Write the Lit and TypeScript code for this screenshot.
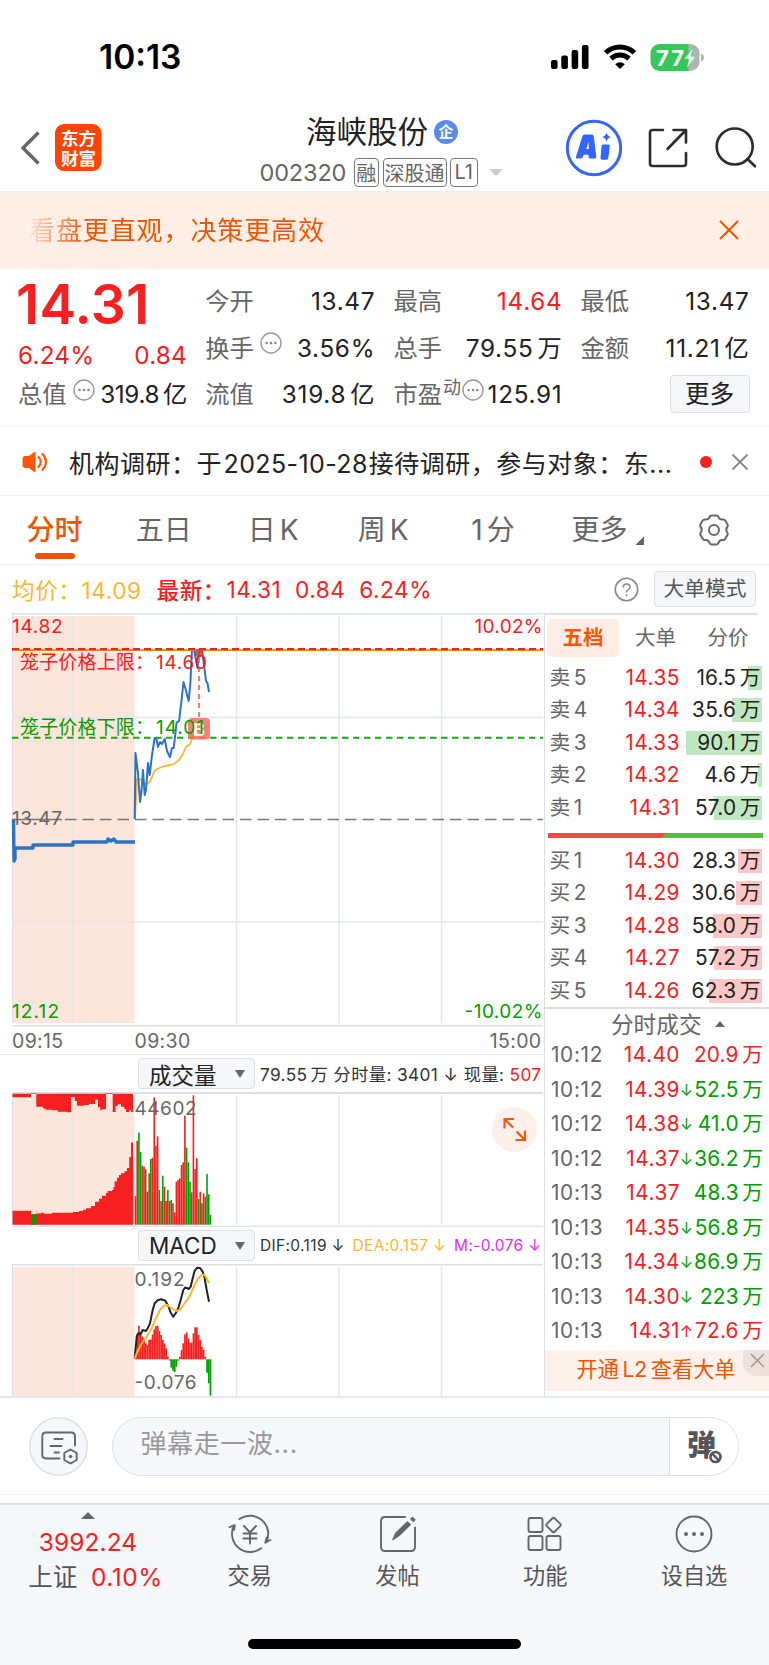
import { LitElement, html, svg, css } from "lit";
import { customElement } from "lit/decorators.js";

const CJK = /([\u4e00-\u9fff]+)/;

/** Puts a small gap between figures and the Chinese unit that follows them. */
const withUnit = (value: string) => {
  const m = value.match(/^([\d.]+)([\u4e00-\u9fff]+)$/);
  return m ? html`${m[1]}<span class="unit">${m[2]}</span>` : value;
};

const spaced = (label: string) =>
  label.split(CJK).filter(Boolean).map((p, i) => (i ? html`<span class="unit">${p}</span>` : p));

const points = (raw: string, s = 1, dy = 0) =>
  raw.trim().split(/\s+/).map((p) => {
    const [x, y] = p.split(",").map(Number);
    return `${(x / s).toFixed(1)},${(y / s + dy).toFixed(1)}`;
  }).join(" ");

const UP = "#f5201f";
const DOWN = "#009f00";

const PRICE = `134.7,819 135.5,753 138,773 140,802 141.5,791 143,770 144.7,795 146,790 148,763 149.7,775 152,755
 154.7,738 156.5,739 158,747 160,742 162,744 164.7,739 167,751 170,757 172,748 173.7,748 175,737 176.5,723 179,721
 181,705 183.5,682 185,687 188.7,701 190.3,684 192,650 194,649 196,660 197.5,668 199,652 202,649 204,665 206,681 207.5,683 209,692`;
const AVERAGE = `135,819 137,779 140,779 143,783 146,784 150,782 154,772 157,769 163,766.5 170,765 174,764 179,760 183,754
 186,747 190,744 193,736 198,730 203,728 209,726`;
const AUCTION = `13.5,820 14,861 15,859 15,848 33,848 33,845 73,845 73,842 107,842 108,839 111,841 114,839 116,842 135,842`;

const VOLUME = `588r 423r 398g 456g 497r 500r 508g 575r 520r 477g 473r 292r 437r 409r 570g 603r 527g 560r 603r 570g 603r 600g
 610r 637r 545r 540r 535r 495r 487r 347r 443g 487g 545g 577r 286r 507r 475r 597g 575r 610g 580r 590r 522g 583g 645g`;
const HISTOGRAM = `1055 1003 977 1005 1010 1015 1030 1035 1020 1018 1003 988 978 978 993 1005 1020 1030 1045 1070 1082 1103
 1112 1116 1100 1082 1070 1050 1030 1003 997 1015 1028 1028 1000 982 982 1005 1020 1040 1050 1070 1118 1150 1187`;
const DIF = `404,1075 410,1010 415,1000 422,1002 428,990 438,993 443,985 450,970 458,930 464,910 474,900 484,898 496,902
 505,918 512,938 520,950 528,938 535,925 542,900 550,870 556,862 566,867 572,860 578,835 584,812 592,803 600,804 608,815
 614,835 620,870 627,905`;
const DEA = `404,1075 412,1055 425,1030 440,1010 455,985 465,960 480,930 492,917 502,915 515,925 528,933 540,930 552,912
 565,895 575,875 585,852 595,835 605,825 613,824 620,835 628,850`;

/** Upper edge steps of the call auction: [x, y] pairs, the value holds until the next x. */
const UNMATCHED: [number, number][] = [[12.5, 1097.3], [31, 1093], [36.3, 1106.7], [43, 1108.5], [45.5, 1109.7], [52, 1110.3],
  [58, 1111.7], [67, 1112.3], [71, 1097], [74.7, 1101], [77, 1105.7], [84, 1105], [89, 1104], [95, 1099.7], [98, 1107.3],
  [100.3, 1110.3], [102, 1109.3], [106, 1093], [112.7, 1112], [115.5, 1106], [117.7, 1104.3], [121, 1106.7], [124.3, 1109],
  [126, 1112], [129.5, 1110], [131, 1112]];
const MATCHED: [number, number][] = [[12.5, 1210.8], [36.3, 1213.5], [41, 1212.7], [44, 1213.7], [52, 1212.8], [65, 1212.8],
  [73, 1212], [79, 1211], [83, 1209.7], [86, 1208.3], [91, 1206], [95, 1201.7], [99, 1198.7], [102, 1195.7], [106, 1193],
  [107.5, 1191], [112, 1190], [113.5, 1187.3], [114.6, 1181.5], [117, 1177.7], [119, 1175], [121, 1173.3], [124.5, 1171.3],
  [127, 1168], [129.3, 1157], [131, 1142.5]];

/** Draws [x, y] steps as a filled shape that stands on (or hangs from) the base line. */
const area = (steps: [number, number][], base: number) => {
  let d = `M${steps[0][0]} ${base}`;
  for (const [x, y] of steps) d += `H${x}V${y}`;
  return d + `H133V${base}Z`;
};

const dots = () => html`<svg class="dots" viewBox="0 0 22 22"><circle cx="11" cy="11" r="10" fill="none" stroke="#999" stroke-width="1.4"/>
  <g fill="#888"><circle cx="6.6" cy="11" r="1.3"/><circle cx="11" cy="11" r="1.3"/><circle cx="15.4" cy="11" r="1.3"/></g></svg>`;

@customElement("stock-header")
class StockHeader extends LitElement {
  static styles = css`
    :host { display: block; }
    .status { height: 114px; display: flex; align-items: center; padding: 0 65px 0 99px; box-sizing: border-box; justify-content: space-between; }
    .time { font-size: 33.500px; font-weight: 600; letter-spacing: 0; line-height: 40px; color: #000; }
    .status svg { display: block; width: 154px; height: 30px; }
    .pct { font: 700 22px Inter, sans-serif; }
    .bar { height: 77px; display: flex; border-bottom: 2px solid #eee; }
    .left { width: 240px; display: block; height: 77px; }
    .middle { width: 285px; }
    .right { width: 244px; height: 77px; display: block; }
    .name { display: flex; align-items: center; padding-left: 66px; height: 36px; font-size: 30.500px; color: #222; gap: 6px; line-height: 36px; }
    .badge { width: 24px; height: 24px; border-radius: 50%; background: #5a8be9; color: #fff; font-size: 15px; line-height: 24px; text-align: center; font-weight: 700; }
    .code { display: flex; align-items: center; height: 30px; margin-top: 7px; padding-left: 19.500px; color: #666; font-size: 23.500px; }
    .num { width: 94px; letter-spacing: -0.150px; }
    .tag { border: 1.500px solid #777; border-radius: 4px; height: 29px; font-size: 20px; box-sizing: border-box; margin-right: 3.500px; display: flex; align-items: center; justify-content: center; }
    .t1 { width: 25.500px; } .t3 { width: 64px; } .t2 { width: 27.500px; }
    .tri { width: 0; border: 7px solid transparent; border-top-color: #ccc; border-bottom: 0; margin-left: 8px; }
    .logo { font: 700 17.500px "Noto Sans CJK SC", sans-serif; }
  `;
  render() {
    return html`
      <div class="status">
        <span class="time">10:13</span>
        <svg viewBox="0 0 154 30">
          <g><rect x="1" y="18" width="6.6" height="9" rx="2"/><rect x="11.3" y="13.6" width="6.6" height="13.4" rx="2"/><rect x="21.6" y="8" width="6.6" height="19" rx="2"/><rect x="31.9" y="3" width="6.6" height="24" rx="2"/></g>
          <g fill="none" stroke="#000" stroke-width="5"><path d="M55.5 10.8a21 21 0 0 1 29 0"/><path d="M61 16.6a13 13 0 0 1 18 0"/></g>
          <path d="M70 27l-4.8-4.8a7 7 0 0 1 9.6 0z"/>
          <path d="M109.500 2H139v27h-29.500a9 9 0 0 1-9-9v-9a9 9 0 0 1 9-9z" fill="#34c759"/>
          <path d="M138.500 2h2a9 9 0 0 1 9 9v9a9 9 0 0 1-9 9h-2z" fill="#b3b3b3"/>
          <path d="M151 11.500q3 1 3 4t-3 4z" fill="#b3b3b3"/>
          <text class="pct" x="106" y="23.500" fill="#fff" textLength="28">77</text>
          <path d="M143.500 5.500l-9.500 11.500h5l-2.400 9.500 9.400-12.200h-5z" fill="#fff" stroke="#34c759" stroke-width=".6"/>
        </svg>
      </div>
      <div class="bar">
        <svg class="left" viewBox="0 114 240 77">
          <path d="M38.500 132.500L23 148l15.500 15.500" fill="none" stroke="#666" stroke-width="3.4"/>
          <rect x="55" y="124" width="46.500" height="47" rx="9" fill="#ff4400"/>
          <g class="logo" fill="#fff"><text x="61" y="145" textLength="35">东方</text><text x="61" y="164.800" textLength="35">财富</text></g>
        </svg>
        <div class="middle">
          <div class="name">海峡股份<span class="badge">企</span></div>
          <div class="code"><span class="num">002320</span>
            <span class="tag t1">融</span><span class="tag t3">深股通</span><span class="tag t2">L1</span>
            <i class="tri"></i></div>
        </div>
        <svg class="right" viewBox="525 114 244 77">
          <circle cx="594" cy="148" r="26.700" fill="none" stroke="#3565ff" stroke-width="3"/>
          <g fill="#3565ff"><path fill-rule="evenodd" d="M584.900 134.500h6.700q1.800 0 2.100 1.800l2.600 20.200q.2 2-1.700 2h-4.300q-1.600 0-1.800-1.600l-.3-2.200h-4.500l-1 2.600q-.5 1.200-1.900 1.200h-3.500q-2 0-1.300-1.900l6.500-20.500q.5-1.600 1.900-1.600zM588.500 142l-2.200 7h2.700z"/>
          <path d="M602.800 144.500h5.500q1.700 0 1.500 1.500l-1.500 11.900q-.3 1.900-2.200 1.900h-4q-1.800 0-1.600-1.800l1-11.700q.2-1.800 1.300-1.800z"/>
          <path d="M606.500 132.500q.9 3.700 4.400 4.600-3.500.9-4.400 4.600-.9-3.700-4.400-4.600 3.500-.9 4.400-4.600z"/></g>
          <g fill="none" stroke="#2c2c2c" stroke-width="2.600" stroke-linecap="round" stroke-linejoin="round">
            <path d="M663 130h-10.500q-2.500 0-2.500 2.500v31q0 2.500 2.500 2.500h31q2.500 0 2.500-2.500v-10.500M673.500 130H686v12.500M685.500 130.500L667.500 149"/>
            <circle cx="734.700" cy="146.500" r="18"/><path d="M747.500 159l7.500 7.300"/></g>
        </svg>
      </div>`;
  }
}

@customElement("quote-summary")
class QuoteSummary extends LitElement {
  static styles = css`
    :host { display: block; }
    .promo { height: 76px; background: #feeee6; display: flex; align-items: center; justify-content: space-between; padding: 0 29px 1px 29px; box-sizing: border-box; color: #ee5500; }
    .slogan { font-size: 26px; letter-spacing: .9px; line-height: 40px; background: linear-gradient(90deg, #ee550010, #ee5500 56px); -webkit-background-clip: text; color: transparent; }
    .promo svg { width: 22px; height: 22px; margin-top: -1px; }
    .grid { display: grid; grid-template-columns: 169px 170px 169px 169px; column-gap: 18.200px; padding: 9px 0 0 18px; height: 158px; box-sizing: border-box; font-size: 24.300px; color: #222; border-bottom: 1.500px solid #f0f1f3; }
    .cell { height: 46.500px; display: flex; align-items: center; justify-content: space-between; line-height: 30px; }
    .cell.first { height: 28px; }
    .cell.first .val { letter-spacing: -.4px; }
    .price { font-size: 55px; font-weight: 600; color: #f5201f; line-height: 53px; height: 51px; letter-spacing: .2px; margin-left: -2px; }
    .chg { height: 51px; display: flex; justify-content: space-between; align-items: center; color: #f5201f; letter-spacing: .2px; }
    .label { color: #666; display: flex; align-items: center; }
    .dots { width: 22px; height: 22px; margin: -9px 0 0 6px; }
    .sup { font-size: 18px; margin-top: -13px; margin-left: 1px; }
    .sup + .dots { margin-left: 1px; margin-right: -2px; }
    .val { letter-spacing: .7px; }
    .up { color: #f5201f; }
    .unit { margin-left: 4px; }
    .more { margin-left: auto; width: 80px; height: 38px; box-sizing: border-box; border: 1.500px solid #dcdfe6; border-radius: 4px; background: #f6f7fa; text-align: center; line-height: 37px; font-size: 24.500px; }
    .news { height: 69px; display: flex; align-items: center; padding: 1px 20px 0 22px; box-sizing: border-box; border-bottom: 1.500px solid #f0f1f3; }
    .horn { width: 28px; height: 24px; }
    .head { margin-left: 19px; width: 622px; font-size: 25px; color: #222; white-space: nowrap; letter-spacing: .5px; }
    .date { margin: 0 1px 0 1.500px; letter-spacing: .4px; }
    .dot { width: 12px; height: 12px; background: #f5201f; border-radius: 50%; margin-left: 9px; }
    .x { width: 18px; height: 18px; margin-left: auto; }
  `;
  private cell(label: unknown, value: string, up = false) {
    return html`<div class="cell"><span class="label">${label}</span><span class="val ${up ? "up" : ""}">${withUnit(value)}</span></div>`;
  }
  render() {
    return html`
      <div class="promo"><span class="slogan">看盘更直观，决策更高效</span>
        <svg viewBox="0 0 22 22"><path d="M2 2l18 18M20 2L2 20" stroke="#ee5500" stroke-width="2"/></svg></div>
      <div class="grid">
        <div><div class="price">14.31</div>
          <div class="chg"><span>6.24%</span><span>0.84</span></div>
          <div class="cell first"><span class="label">总值${dots()}</span><span class="val">${withUnit("319.8亿")}</span></div></div>
        <div>${this.cell("今开", "13.47")}${this.cell(html`换手${dots()}`, "3.56%")}${this.cell("流值", "319.8亿")}</div>
        <div>${this.cell("最高", "14.64", true)}${this.cell("总手", "79.55万")}${this.cell(html`市盈<span class="sup">动</span>${dots()}`, "125.91")}</div>
        <div>${this.cell("最低", "13.47")}${this.cell("金额", "11.21亿")}<div class="cell"><span class="more">更多</span></div></div>
      </div>
      <div class="news">
        <svg class="horn" viewBox="0 0 28 24"><path d="M1 8.500q0-2 2-2h4L13 2v20l-6-4.500H3q-2 0-2-2z" fill="#ff5500" stroke="#ff5500" stroke-linejoin="round"/><path d="M16.500 7q4.500 5 0 10M20.500 4q7 8 0 16" fill="none" stroke="#ff5500" stroke-width="2" stroke-linecap="round"/></svg>
        <span class="head">机构调研：于<span class="date">2025-10-28</span>接待调研，参与对象：东...</span>
        <i class="dot"></i>
        <svg class="x" viewBox="0 0 18 18"><path d="M1.500 1.500l15 15M16.500 1.500l-15 15" stroke="#888" stroke-width="1.800"/></svg>
      </div>`;
  }
}

@customElement("period-tabs")
class PeriodTabs extends LitElement {
  static styles = css`
    :host { display: block; }
    .tabs { height: 69px; box-sizing: border-box; border-bottom: 1.500px solid #f0f1f3; display: grid; grid-template-columns: 109px 109.500px 109.500px 110.500px 109px 107.500px 1fr; font-size: 28px; color: #666; line-height: 69px; text-align: center; }
    .tab { display: flex; flex-direction: column; align-items: center; }
    .tab.on { color: #ee5500; font-weight: 500; }
    .tab.on::after { content: ""; width: 40px; height: 6px; border-radius: 3px; background: #ee5500; margin-top: -12.500px; }
    .unit { margin-left: 4px; }
    .more { display: flex; justify-content: flex-end; align-items: center; gap: 8px; }
    .corner { width: 8px; height: 8px; background: linear-gradient(135deg, transparent 50%, #666 50%); margin-top: 20px; margin-right: 11.500px; }
    .gear { width: 34px; height: 34px; margin: 16.500px 0 0 41.500px; display: block; }
    .legend { height: 48px; display: flex; align-items: center; padding: 0 13px 0 12px; font-size: 22.700px; color: #f5201f; letter-spacing: .5px; white-space: pre; }
    .avg { color: #fdb62f; width: 144.500px; }
    .latest { width: 70px; font-weight: 500; }
    .help { width: 25px; height: 25px; margin-left: auto; }
    .mode { margin-left: 15px; width: 102px; height: 36px; box-sizing: border-box; border: 1.500px solid #dcdfe6; border-radius: 4px; background: #f6f7fa; color: #555; font-size: 20.700px; text-align: center; line-height: 34px; letter-spacing: .1px; }
  `;
  render() {
    return html`
      <div class="tabs">
        <div class="tab on">分时</div><div class="tab">五日</div><div class="tab"><span>日<span class="unit">K</span></span></div>
        <div class="tab"><span>周<span class="unit">K</span></span></div><div class="tab"><span>1<span class="unit">分</span></span></div>
        <div class="more">更多<i class="corner"></i></div>
        <svg class="gear" viewBox="0 0 34 34" fill="none" stroke="#666" stroke-width="2"><circle cx="17" cy="17" r="5"/>
          <path stroke-linejoin="round" d="M14.500 2.500h5q1.500 0 2 1.500 1 2.800 4 2.600 2-.3 2.800 1l2.300 4q.7 1.400-.3 2.400-2.200 2.500 0 5.500 1 1.300.2 2.500l-2.400 4q-.8 1.300-2.400 1-3-.4-4.200 2.800-.5 1.700-2 1.700h-5q-1.500 0-2-1.700-1.200-3.200-4.200-2.800-1.600.3-2.400-1l-2.400-4q-.8-1.200.2-2.500 2.200-3 0-5.500-1-1-.3-2.400l2.300-4q.8-1.300 2.800-1 3 .2 4-2.600.5-1.500 2-1.500z"/></svg>
      </div>
      <div class="legend"><span class="avg">均价：14.09</span><span class="latest">最新：</span><span>14.31  0.84  6.24%</span>
        <svg class="help" viewBox="0 0 25 25" fill="none" stroke="#888" stroke-width="1.600"><circle cx="12.500" cy="12.500" r="11.200"/><path d="M9.200 10.500q0-3.500 3.400-3.500t3.400 3.100q0 1.700-2 2.800-1.500.9-1.500 2.600M12.500 17.200v2"/></svg>
        <span class="mode">大单模式</span></div>`;
  }
}

@customElement("intraday-chart")
class IntradayChart extends LitElement {
  static styles = css`
    :host { display: block; width: 543.500px; flex: none; position: relative; }
    svg { display: block; }
    .l { font: 19px Inter, "Noto Sans CJK SC", sans-serif; }
    .axis { display: flex; height: 28px; padding: 0 2px 0 12px; font-size: 19.500px; letter-spacing: .35px; color: #666; align-items: center; border-bottom: 1.500px solid #e4e6eb; box-sizing: border-box; }
    .axis span { width: 122.500px; }
    .axis span:last-child { margin-left: auto; width: auto; }
    .row { display: flex; align-items: center; height: 37px; padding: 0 2px 0 138px; color: #333; box-sizing: border-box; white-space: nowrap; }
    .pick { width: 117px; height: 31.500px; box-sizing: border-box; border: 1.500px solid #dcdfe6; border-radius: 4px; background: #f6f7fa; display: flex; align-items: center; justify-content: space-between; padding: 0 9px 0 10px; font-size: 22.500px; color: #222; }
    .pick i { border: 5px solid transparent; border-top: 8px solid #666; border-bottom: 0; }
    .info { flex: 1; margin-left: 5px; display: flex; justify-content: space-between; font-size: 17.300px; letter-spacing: .35px; }
    .macd { font-size: 15.500px; letter-spacing: .35px; }
    .red { color: #f5201f; } .dea { color: #fdb62f; } .m { color: #e22de8; }
    .unit { margin-left: 3px; }
    .expand { position: absolute; left: 492px; top: 494px; width: 45px; height: 45px; border-radius: 50%; background: #fdf0ea; }
  `;
  private grid(top: number, bottom: number) {
    return svg`<rect x="12.500" y=${top} width="122" height=${bottom - top} fill="#fce5da"/>
      <path d="M73 ${top}V${bottom}M236.500 ${top}V${bottom}M339 ${top}V${bottom}M441.500 ${top}V${bottom}" stroke="#e3e6ec" stroke-width="1.400"/>
      <path d="M12.500 ${top - 3}V${bottom}" stroke="#dcdfe6"/>`;
  }
  private bars() {
    return VOLUME.trim().split(/\s+/).map((v, i) => {
      const y = 1000 + parseFloat(v) / 3;
      return svg`<rect x=${134.7 + i * 1.703} y=${y} width="1.600" height=${1224.7 - y} fill=${v.endsWith("g") ? DOWN : UP}/>`;
    });
  }
  private histogram() {
    return HISTOGRAM.trim().split(/\s+/).map((v, i) => {
      const y = 1000 + Number(v) / 3, zero = 1359.3;
      return svg`<rect x=${134.7 + i * 1.703} y=${Math.min(y, zero)} width="1.700" height=${Math.abs(zero - y)} fill=${y > zero ? DOWN : UP}/>`;
    });
  }
  render() {
    return html`
      <svg width="543" height="414" viewBox="0 613 543 414">
        ${this.grid(616, 1023)}
        <path d="M12 613.700H544M12 1025.700H544" stroke="#dcdfe6" stroke-width="1.600"/>
        <path d="M12 717.500H544M12 922H544" stroke="#e3e6ec" stroke-width="1.400"/>
        <path d="M65 819.500H544" stroke="#777" stroke-width="1.300" stroke-dasharray="11.500 6"/>
        <path d="M12 819.500H62" stroke="#777" stroke-width="1.300"/>
        <polyline points=${AUCTION} fill="none" stroke="#2e72c4" stroke-width="3.400" stroke-linejoin="round"/>
        <polyline points=${points(AVERAGE)} fill="none" stroke="#fdb62f" stroke-width="1.800"/>
        <polyline points=${points(PRICE)} fill="none" stroke="#2e72c4" stroke-width="2" stroke-linejoin="round"/>
        <path d="M12 650.200H544" stroke="#f0801c" stroke-width="1.800"/>
        <path d="M12 649H544" stroke="#f5201f" stroke-width="1.800" stroke-dasharray="7 4"/>
        <path d="M12 737.700H544" stroke="#18a818" stroke-width="2" stroke-dasharray="6.500 4.500"/>
        <path d="M199 658V718" stroke="#fb6a5c" stroke-width="1.800" stroke-dasharray="5 4"/>
        <circle cx="199" cy="653" r="4.200" fill="#d23c3c" fill-opacity=".85"/>
        <rect x="188" y="718" width="22" height="21.500" rx="4" fill="#ff6a5a" fill-opacity=".85"/>
        <text x="199" y="735.500" text-anchor="middle" fill="#fff" font-size="18" font-weight="700" font-family="Inter">B</text>
        <g class="l">
          <text x="12" y="632.700" fill=${UP} textLength="50.500">14.82</text>
          <text x="542.500" y="632.700" fill=${UP} text-anchor="end" textLength="68">10.02%</text>
          <text x="20" y="668.500" fill=${UP} textLength="134">笼子价格上限：</text><text x="156" y="668.500" fill=${UP} textLength="51">14.60</text>
          <text x="20" y="734" fill=${DOWN} textLength="134">笼子价格下限：</text><text x="156" y="734" fill=${DOWN} textLength="48">14.01</text>
          <text x="12" y="825" fill="#666" textLength="50">13.47</text>
          <text x="12" y="1017.700" fill=${DOWN} textLength="47">12.12</text>
          <text x="542.500" y="1017.700" fill=${DOWN} text-anchor="end" textLength="78">-10.02%</text>
        </g>
      </svg>
      <div class="axis"><span>09:15</span><span>09:30</span><span>15:00</span></div>
      <div class="row"><div class="pick">成交量<i></i></div>
        <div class="info"><span>79.55<span class="unit">万</span></span><span>分时量: 3401 ↓</span><span>现量: <span class="red">507</span></span></div></div>
      <svg width="543" height="135" viewBox="0 1092 543 135">
        ${this.grid(1095.5, 1224.5)}
        <path d="M12 1093H544" stroke="#dcdfe6" stroke-width="2"/><path d="M12 1226.300H544" stroke="#e4e6eb" stroke-width="1.400"/>
        <path d=${area(UNMATCHED, 1093.7)} fill=${UP}/><path d=${area(MATCHED, 1224.7)} fill=${UP}/>
        <rect x="31" y="1208" width="5.300" height="6.300" fill="#fce5da"/><rect x="31" y="1214.300" width="5.300" height="10.400" fill=${DOWN}/>
        ${this.bars()}
        <text class="l" x="134.500" y="1114.500" fill="#666" textLength="62">44602</text>
      </svg>
      <div class="row"><div class="pick">MACD<i></i></div>
        <div class="info macd"><span>DIF:0.119 ↓</span><span class="dea">DEA:0.157 ↓</span><span class="m">M:-0.076 ↓</span></div></div>
      <svg width="543" height="132" viewBox="0 1264 543 132">
        ${this.grid(1267, 1396)}
        <path d="M12 1264.800H544" stroke="#dcdfe6" stroke-width="1.600"/>
        ${this.histogram()}
        <polyline points=${points(DIF, 3, 1000)} fill="none" stroke="#222" stroke-width="2" stroke-linejoin="round"/>
        <polyline points=${points(DEA, 3, 1000)} fill="none" stroke="#fdb62f" stroke-width="2" stroke-linejoin="round"/>
        <g class="l" fill="#666"><text x="134.500" y="1285.700" textLength="50">0.192</text><text x="134.500" y="1388.700" textLength="62">-0.076</text></g>
      </svg>
      <svg class="expand" viewBox="0 0 45 45" fill="none" stroke="#ee5a10" stroke-width="2.200"><path d="M12.500 21.500v-9.500h9.500M12.500 12l8.500 8.500M33 23.500v9.500h-9.500M33 33l-8.500-8.500"/></svg>`;
  }
}

type Level = [string, string, string, number];
const ASKS: Level[] = [["卖5", "14.35", "16.5万", 14], ["卖4", "14.34", "35.6万", 30], ["卖3", "14.33", "90.1万", 76], ["卖2", "14.32", "4.6万", 4], ["卖1", "14.31", "57.0万", 48]];
const BIDS: Level[] = [["买1", "14.30", "28.3万", 24], ["买2", "14.29", "30.6万", 26], ["买3", "14.28", "58.0万", 49], ["买4", "14.27", "57.2万", 48], ["买5", "14.26", "62.3万", 53]];
const TRADES: [string, string, string, string, boolean][] = [
  ["10:12", "14.40", "", "20.9万", true], ["10:12", "14.39", "↓", "52.5万", false], ["10:12", "14.38", "↓", "41.0万", false],
  ["10:12", "14.37", "↓", "36.2万", false], ["10:13", "14.37", "", "48.3万", false], ["10:13", "14.35", "↓", "56.8万", false],
  ["10:13", "14.34", "↓", "86.9万", false], ["10:13", "14.30", "↓", "223万", false], ["10:13", "14.31", "↑", "72.6万", true]];

@customElement("order-book")
class OrderBook extends LitElement {
  static styles = css`
    :host { display: block; width: 225.500px; border-left: 1.500px solid #dcdfe6; box-sizing: border-box; font-size: 20.800px; color: #222; }
    .rule { height: 1.500px; background: #dcdfe6; width: 212px; }
    .tabs { display: grid; grid-template-columns: 72px 73px 72px; padding: 4px 0 0 2.500px; height: 47px; box-sizing: border-box; text-align: center; line-height: 38px; font-size: 20.500px; color: #666; }
    .on { background: #ffede5; border-radius: 5px; color: #ff5500; font-weight: 700; height: 38px; }
    .level { height: 32.500px; display: grid; grid-template-columns: 48px 82px 82px; padding-left: 5px; align-items: center; line-height: 24px; }
    .lab { color: #666; }
    .p { text-align: right; color: #f5201f; letter-spacing: .5px; margin-right: -.5px; }
    .v { text-align: right; background: no-repeat right center; padding-right: 1px; letter-spacing: .2px; }
    .unit { margin-left: 3.500px; letter-spacing: 0; }
    .split { height: 5px; width: 214.500px; margin: 9px 0 6.500px 3.500px; background: linear-gradient(135deg, #ee4b4b 54%, #5cb944 54%); }
    .head { border-top: 2px solid #dcdfe6; height: 31px; display: flex; align-items: center; justify-content: center; gap: 13px; color: #666; font-size: 22.700px; box-sizing: border-box; padding: 0 0 0 22px; }
    .head i { border: 5.500px solid transparent; border-bottom: 6.500px solid #666; border-top: 0; }
    .trade { display: grid; grid-template-columns: 60px 68.500px 14px 69.500px; padding-left: 6.500px; height: 34.500px; align-items: center; line-height: 24px; }
    .up { color: #f5201f; } .down { color: #009f00; }
    .a { font-size: 16px; text-align: center; }
    .t { color: #666; letter-spacing: .65px; }
    .q { display: flex; justify-content: flex-end; letter-spacing: .2px; white-space: nowrap; }
    .promo { height: 41px; background: #fdf1ec; display: flex; margin-top: 1px; color: #ee5500; font-size: 21.200px; line-height: 39px; }
    .ptext { padding-left: 32px; width: 198px; box-sizing: border-box; white-space: nowrap; }
    .px { width: 26px; height: 26px; background: #eee0da; border-bottom-left-radius: 14px; display: block; }
  `;
  private level([lab, p, v, w]: Level, color: string) {
    return html`<div class="level"><span class="lab">${spaced(lab)}</span><span class="p">${p}</span>
      <span class="v" style="background-image:linear-gradient(${color},${color});background-size:${w}px 24px">${withUnit(v)}</span></div>`;
  }
  render() {
    return html`
      <div class="rule"></div>
      <div class="tabs"><span class="on">五档</span><span>大单</span><span>分价</span></div>
      ${ASKS.map((l) => this.level(l, "#bfe8c0"))}
      <div class="split"></div>
      ${BIDS.map((l) => this.level(l, "#fdc7c7"))}
      <div class="head">分时成交<i></i></div>
      ${TRADES.map(([t, p, a, q, up]) => html`<div class="trade"><span class="t">${t}</span><span class="p">${p}</span>
        <span class="a ${up ? "up" : "down"}">${a}</span><span class="q ${up ? "up" : "down"}">${withUnit(q)}</span></div>`)}
      <div class="promo"><span class="ptext">开通<span class="unit">L2</span><span class="unit">查看大单</span></span>
        <svg class="px" viewBox="0 0 26 26"><path d="M8 4l13 13M21 4L8 17" stroke="#999" stroke-width="1.500"/></svg></div>`;
  }
}

@customElement("bottom-bar")
class BottomBar extends LitElement {
  static styles = css`
    :host { display: block; }
    .chat { height: 99px; box-sizing: border-box; border-top: 2px solid #e8e9ec; border-bottom: 1.500px solid #f0f1f3; display: flex; padding: 18.500px 30px 0 29px; }
    .round { width: 59px; height: 59px; flex: none; }
    .field { margin-left: 23.500px; width: 628px; height: 59px; box-sizing: border-box; border: 1.500px solid #dcdfe6; border-radius: 30px; background: #f6f7fa; display: flex; overflow: hidden; }
    .ph { flex: 1; padding-left: 28px; font-size: 26px; line-height: 52px; color: #999; letter-spacing: .6px; }
    .danmu { width: 68px; height: 57px; border-left: 1.500px solid #dcdfe6; background: #fff; display: block; }
    .dm { font: 900 29px "Noto Sans CJK SC", sans-serif; }
    .nav { margin-top: 8px; height: 162px; box-sizing: border-box; border-top: 2px solid #dfe1e5; background: #f6f7fa; display: flex; flex-direction: column; justify-content: space-between; align-items: center; }
    .items { display: grid; grid-template-columns: 176px 147.500px 148px 147.500px 150px; width: 100%; }
    .index { font-size: 24.500px; color: #f5201f; letter-spacing: .05px; line-height: 34.500px; text-align: center; }
    .index i { display: block; width: 0; margin: 7px auto 6px; border: 7px solid transparent; border-top: 0; border-bottom: 7px solid #666; }
    .index div { white-space: pre; }
    .index .sh { padding-left: 15px; letter-spacing: .5px; }
    .index .sz { color: #555; letter-spacing: 0; margin-right: -1px; }
    .item { font-size: 22.200px; line-height: 30px; padding-top: 9px; color: #555; text-align: center; }
    .item svg { display: block; margin: 0 auto 7px; width: 44px; height: 40px; }
    .home { width: 273px; height: 10px; border-radius: 5px; background: #000; margin-bottom: 16px; }
  `;
  private icon(body: unknown) {
    return html`<svg viewBox="-22 -20 44 40" fill="none" stroke="#666" stroke-width="1.900" stroke-linecap="round" stroke-linejoin="round">${body}</svg>`;
  }
  render() {
    return html`
      <div class="chat">
        <svg class="round" viewBox="0 0 59 59" fill="none" stroke="#666" stroke-width="1.900" stroke-linecap="round">
          <circle cx="29.500" cy="29.500" r="28.700" fill="#f6f7fa" stroke="#dcdfe6" stroke-width="1.400"/>
          <path d="M30.500 41.500H17q-3.700 0-3.700-3.700V19.200q0-3.700 3.700-3.700h25.300q3.700 0 3.700 3.700v9.300M25.500 22h8M21.500 29h11M25.500 35.500h4.500"/>
          <path d="M41.500 32.500l6.200 3.500v7l-6.200 3.500-6.200-3.500v-7z" stroke-linejoin="round"/><circle cx="41.500" cy="39.500" r="1.300" fill="#666" stroke-width="1"/></svg>
        <div class="field"><span class="ph">弹幕走一波...</span>
          <svg class="danmu" viewBox="0 0 68 57"><text class="dm" x="17" y="38" fill="#555">弹</text>
            <circle cx="45.500" cy="39" r="7.500" fill="#fff"/><circle cx="45.500" cy="39" r="5" fill="none" stroke="#555" stroke-width="2.600"/><path d="M42 35.500l7 7" stroke="#555" stroke-width="2.400"/></svg></div>
      </div>
      <div class="nav">
        <div class="items">
          <div class="index"><i></i><div>3992.24</div><div class="sh"><span class="sz">上证</span>  0.10%</div></div>
          <div class="item">${this.icon(svg`<path d="M-10.500-14.900A18.200 18.200 0 0 1 16.500 7.700M11.200 14.300A18.200 18.200 0 0 1-16-8.500M-20.500-6.800l5.300-2-.7 4.500M20.300 6l-5 2.700 1.200-5M-6-8L0-1.500 6-8M0-1.500V9.500M-6.500-.5h13M-6.500 4.500h13"/>`)}交易</div>
          <div class="item">${this.icon(svg`<path d="M7-17H-13q-4 0-4 4V13q0 4 4 4H13q4 0 4-4V-6.500"/><path d="M-5 5.500l3-6.500 11.500-11 2.700 2.700L1 1.500zM13-15l1.500-1.500 2.300 2.300-1.500 1.500z" fill="#666" stroke-width="1.500"/>`)}发帖</div>
          <div class="item">${this.icon(svg`<rect x="-16.500" y="-16" width="14" height="14" rx="2"/><rect x="-16.500" y="2" width="14" height="14" rx="2"/><rect x="1.500" y="2" width="14" height="14" rx="2"/><rect x="3" y="-14.500" width="11" height="11" rx="1.500" transform="rotate(45 8.500 -9)"/>`)}功能</div>
          <div class="item">${this.icon(svg`<circle r="17.500"/><g fill="#666" stroke="none"><circle cx="-8" r="2"/><circle r="2"/><circle cx="8" r="2"/></g>`)}设自选</div>
        </div>
        <div class="home"></div>
      </div>`;
  }
}

@customElement("app-root")
class AppRoot extends LitElement {
  static styles = css`
    :host { display: block; width: 769px; height: 1665px; overflow: hidden; background: #fff; font-family: Inter, "Noto Sans CJK SC", sans-serif; font-style: normal; }
    .market { display: flex; height: 783px; overflow: hidden; }
  `;
  render() {
    return html`<stock-header></stock-header><quote-summary></quote-summary><period-tabs></period-tabs>
      <div class="market"><intraday-chart></intraday-chart><order-book></order-book></div>
      <bottom-bar></bottom-bar>`;
  }
}
